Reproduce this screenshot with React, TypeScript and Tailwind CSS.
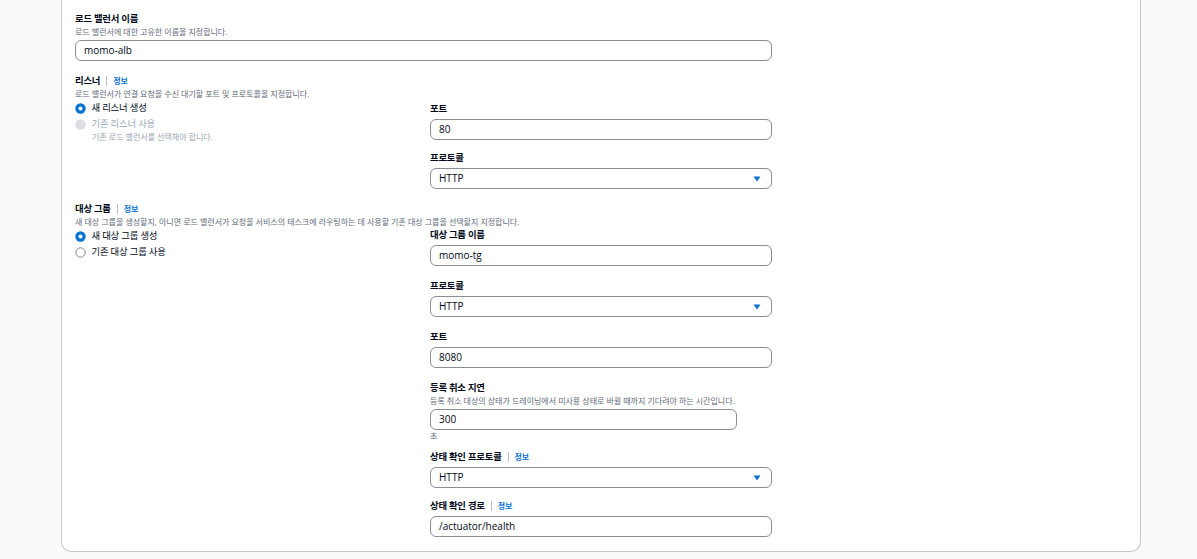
import type { ReactNode } from 'react';

const FONT = "font-['Open_Sans','Noto_Sans_CJK_KR',sans-serif]";

function Label({ children, info }: { children: ReactNode; info?: boolean }) {
  return (
    <div className="flex h-[14px] items-center text-[9.4px] leading-[14px] font-bold tracking-[-0.025em] text-[#000716]">
      <span>{children}</span>
      {info && (
        <>
          <span className="mx-[6px] h-[10px] w-px bg-[#b6bec9]" />
          <span className="text-[8px] font-bold tracking-[-0.01em] text-[#0972d3]">정보</span>
        </>
      )}
    </div>
  );
}

function Desc({ children, className = '' }: { children: ReactNode; className?: string }) {
  return <div className={`h-[12px] text-[8px] leading-[12px] text-[#5f6b7a] ${className}`}>{children}</div>;
}

function Input({ value, className = 'w-full', mt = 'mt-[3px]' }: { value: string; className?: string; mt?: string }) {
  return (
    <div
      className={`${mt} flex h-[21px] items-center rounded-[6px] border border-[#8c8c94] bg-white pl-[8px] text-[10px] text-[#000716] ${className}`}
    >
      {value}
    </div>
  );
}

function Select({ value, mt = 'mt-[3px]' }: { value: string; mt?: string }) {
  return (
    <div
      className={`${mt} flex h-[21px] w-full items-center justify-between rounded-[6px] border border-[#8c8c94] bg-white pr-[10px] pl-[8px] text-[10px] text-[#000716]`}
    >
      <span>{value}</span>
      <svg width="8" height="6" viewBox="0 0 8 6">
        <path d="M0.5 0.5h7L4 5.5z" fill="#0972d3" />
      </svg>
    </div>
  );
}

function Radio({ state, children }: { state: 'on' | 'off' | 'disabled'; children: ReactNode }) {
  return (
    <div className="flex h-[16px] items-center">
      <svg width="11" height="11" viewBox="0 0 11 11" className="ml-[-0.5px] shrink-0">
        {state === 'on' && (
          <>
            <circle cx="5.5" cy="5.5" r="5.2" fill="#0972d3" />
            <circle cx="5.5" cy="5.5" r="2" fill="#ffffff" />
          </>
        )}
        {state === 'off' && <circle cx="5.5" cy="5.5" r="4.7" fill="#ffffff" stroke="#7d8998" strokeWidth="1" />}
        {state === 'disabled' && <circle cx="5.5" cy="5.5" r="5.2" fill="#dcdee2" />}
      </svg>
      <span
        className={`ml-[6px] text-[9.4px] tracking-[-0.02em] ${state === 'disabled' ? 'text-[#9ba7b6]' : 'text-[#000716]'}`}
      >
        {children}
      </span>
    </div>
  );
}

export default function App() {
  return (
    <div className={`min-h-screen bg-[#fafafa] pl-[61px] ${FONT}`}>
      <div className="w-[1080px] rounded-b-[10px] border-x border-b border-[#c6c6cd] bg-white px-[13px] pt-[12px] pb-[14px]">
        {/* 로드 밸런서 이름 */}
        <Label>로드 밸런서 이름</Label>
        <Desc>로드 밸런서에 대한 고유한 이름을 지정합니다.</Desc>
        <Input value="momo-alb" className="w-[697px]" mt="mt-[2px]" />

        {/* 리스너 */}
        <div className="mt-[13px]">
          <Label info>리스너</Label>
          <Desc>로드 밸런서가 연결 요청을 수신 대기할 포트 및 프로토콜을 지정합니다.</Desc>
        </div>
        <div className="mt-[2px] flex">
          <div className="mt-[-2px] w-[355px]">
            <Radio state="on">새 리스너 생성</Radio>
            <Radio state="disabled">기존 리스너 사용</Radio>
            <div className="ml-[17px] h-[10px] text-[8px] leading-[10px] text-[#9ba7b6]">
              기존 로드 밸런서를 선택해야 합니다.
            </div>
          </div>
          <div className="w-[342px]">
            <Label>포트</Label>
            <Input value="80" />
            <div className="mt-[11px]">
              <Label>프로토콜</Label>
              <Select value="HTTP" />
            </div>
          </div>
        </div>

        {/* 대상 그룹 */}
        <div className="mt-[13px]">
          <Label info>대상 그룹</Label>
          <Desc>
            새 대상 그룹을 생성할지, 아니면 로드 밸런서가 요청을 서비스의 태스크에 라우팅하는 데 사용할 기존 대상 그룹을
            선택할지 지정합니다.
          </Desc>
        </div>
        <div className="flex">
          <div className="w-[355px]">
            <Radio state="on">새 대상 그룹 생성</Radio>
            <Radio state="off">기존 대상 그룹 사용</Radio>
          </div>
          <div className="w-[342px]">
            <Label>대상 그룹 이름</Label>
            <Input value="momo-tg" />

            <div className="mt-[13px]">
              <Label>프로토콜</Label>
              <Select value="HTTP" />
            </div>

            <div className="mt-[13px]">
              <Label>포트</Label>
              <Input value="8080" />
            </div>

            <div className="mt-[13px]">
              <Label>등록 취소 지연</Label>
              <Desc>등록 취소 대상의 상태가 드레이닝에서 미사용 상태로 바뀔 때까지 기다려야 하는 시간입니다.</Desc>
              <Input value="300" className="w-[307px]" mt="mt-[2px]" />
              <Desc>초</Desc>
            </div>

            <div className="mt-[8px]">
              <Label info>상태 확인 프로토콜</Label>
              <Select value="HTTP" />
            </div>

            <div className="mt-[11px]">
              <Label info>상태 확인 경로</Label>
              <Input value="/actuator/health" />
            </div>
          </div>
        </div>
      </div>
    </div>
  );
}
